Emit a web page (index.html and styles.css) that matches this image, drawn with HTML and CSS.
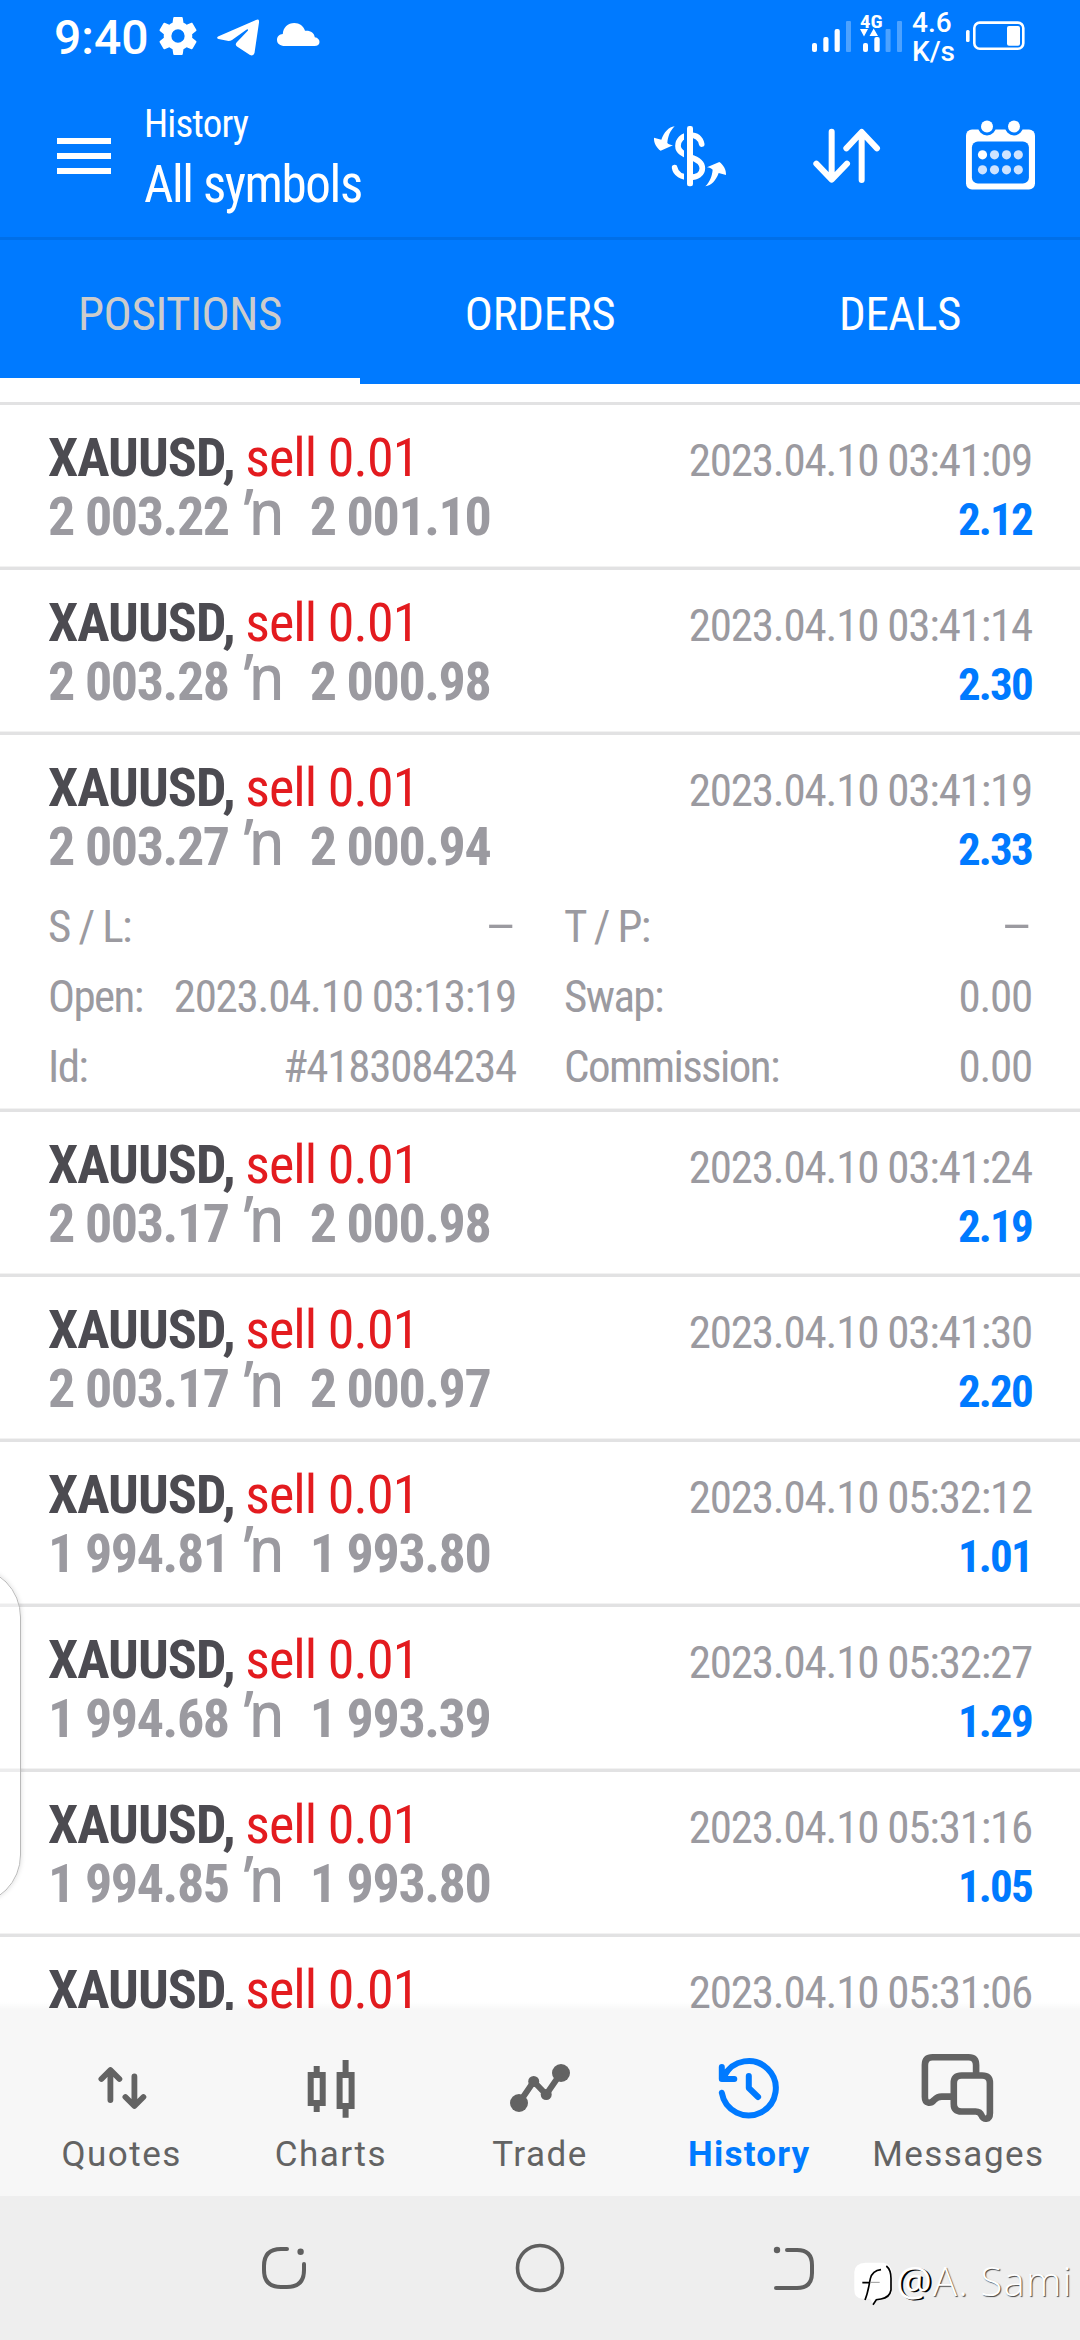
FILE: index.html
```html
<!DOCTYPE html>
<html lang="en">
<head>
<meta charset="utf-8">
<title>History</title>
<link rel="stylesheet" href="styles.css">
</head>
<body>
<div class="screen">
  <header class="top">
    <div class="status">
      <span class="clock">9:40</span>
      <svg class="gear" width="38" height="76" viewBox="0 0 38 76"><path transform="translate(-3.8 13.2) scale(1.9)" fill="#fff" d="M19.43 12.98c.04-.32.07-.64.07-.98s-.03-.66-.07-.98l2.11-1.65c.19-.15.24-.42.12-.64l-2-3.46c-.12-.22-.39-.3-.61-.22l-2.49 1c-.52-.4-1.08-.73-1.69-.98l-.38-2.65C14.46 2.18 14.25 2 14 2h-4c-.25 0-.46.18-.49.42l-.38 2.65c-.61.25-1.17.59-1.69.98l-2.49-1c-.23-.09-.49 0-.61.22l-2 3.46c-.13.22-.07.49.12.64l2.11 1.65c-.04.32-.07.65-.07.98s.03.66.07.98l-2.11 1.65c-.19.15-.24.42-.12.64l2 3.46c.12.22.39.3.61.22l2.49-1c.52.4 1.08.73 1.69.98l.38 2.65c.03.24.24.42.49.42h4c.25 0 .46-.18.49-.42l.38-2.65c.61-.25 1.17-.59 1.69-.98l2.49 1c.23.09.49 0 .61-.22l2-3.46c.12-.22.07-.49-.12-.64zM12 15.5A3.5 3.5 0 1 1 12 8.5a3.5 3.5 0 0 1 0 7z"/></svg>
      <svg class="plane" width="42" height="76" viewBox="217 0 42 76"><path fill="#fff" d="M218 36.500L256 20Q259.500 18.500 259 22.500L254.500 53Q253.500 56.500 250 55L237 46.500Q234.500 44.500 237 42L248 30.500Q248.500 28.500 246 30L232 40Q230.500 41 228.500 41L218.500 39Q216 38 218 36.500Z"/></svg>
      <svg class="cloud" width="43" height="76" viewBox="277 0 43 76"><path fill="#fff" d="M285 46C280 46 277 43.500 277 40C277 36.500 279.500 34.200 282.800 34C283 27.500 288 23 294.300 23C299.500 23 303.500 26 305 30.800C310.500 30.300 314.300 33 314.800 37.300C317.800 37.800 319.500 39.600 319.500 42C319.500 44.500 317.500 46 314.500 46Z"/></svg>
      <svg class="signal" width="91" height="76" viewBox="812 0 91 76">
        <g fill="#fff">
          <rect x="812" y="43" width="5" height="9" rx="2"/><rect x="823.300" y="37" width="5.200" height="15" rx="2"/><rect x="834.600" y="29" width="5.200" height="23" rx="2"/><rect x="846" y="21" width="5" height="31" rx="1" opacity=".3"/>
          <rect x="863" y="43" width="5" height="9" rx="2"/><rect x="874.300" y="37" width="5.400" height="15" rx="2"/><rect x="885.600" y="29" width="5" height="23" rx="1" opacity=".3"/><rect x="897" y="21" width="5" height="31" rx="1" opacity=".3"/>
          <path d="M860 29H868L864 36.500ZM869.500 36L873.700 28.500L878 36Z"/>
        </g>
        <text class="net-type" x="860" y="27.500" textLength="22.500" lengthAdjust="spacingAndGlyphs">4G</text>
      </svg>
      <span class="speed">4.6<br>K/s</span>
      <svg width="60" height="76" viewBox="966 0 60 76"><rect x="966" y="30" width="3.600" height="12" rx="1.500" fill="#fff"/><rect x="974.300" y="22.600" width="49" height="26.200" rx="5.500" fill="none" stroke="#fff" stroke-width="2.600"/><rect x="1007" y="26" width="13" height="19.700" rx="2" fill="#fff"/></svg>
    </div>
    <div class="bar">
      <svg class="menu" width="54" height="36" viewBox="0 0 54 36"><path d="M0 3H54M0 18H54M0 33H54" stroke="#fff" stroke-width="6"/></svg>
      <div class="titles">
        <div class="title">History</div>
        <div class="subtitle">All symbols</div>
      </div>
      <svg class="dollar" width="74" height="62" viewBox="39 44 222 186">
        <path fill="none" stroke="#fff" stroke-width="17" stroke-linecap="round" d="M185 101C181 83 168 74 150 74C128 74 114 89 114 107C114 124 130 132 150 140C172 147 187 157 187 174C187 191 172 201 150 201C125 201 107 190 104 172"/>
        <rect x="132" y="60" width="10" height="155" fill="#007aff"/>
        <rect x="141" y="47" width="18" height="181" rx="7" fill="#fff"/>
        <path id="turn" fill="#fff" d="M104 48C86 50 72 66 64 88L42 82C41 98 50 113 62 121L99 105C92 104 86 102 82 98C84 78 90 62 104 48Z"/>
        <use href="#turn" transform="rotate(180 150 138)"/>
      </svg>
      <svg class="sort" width="68" height="56" viewBox="517 54 204 168"><path fill="none" stroke="#fff" stroke-width="18" stroke-linecap="round" stroke-linejoin="round" d="M573 65V208M527 161L573 209L619 161M663 210V67M617 115L663 66L709 115"/></svg>
      <svg class="calendar" width="69" height="70" viewBox="966 119.500 69 70">
        <rect x="966" y="129" width="69" height="60" rx="6" fill="#fff"/>
        <rect x="971.900" y="141" width="57" height="42" rx="6" fill="#007aff"/>
        <circle cx="987" cy="126" r="9" fill="#007aff"/><circle cx="1014" cy="126" r="9" fill="#007aff"/>
        <g fill="#fff"><circle cx="987" cy="126" r="6"/><circle cx="1014" cy="126" r="6"/><circle cx="982.500" cy="154.300" r="4.600"/></g>
        <g fill="#cfe3ff"><circle cx="994.500" cy="154.300" r="4.600"/><circle cx="1006.500" cy="154.300" r="4.600"/><circle cx="1018.300" cy="154.300" r="4.600"/><circle cx="982.500" cy="169.300" r="4.600"/><circle cx="994.500" cy="169.300" r="4.600"/><circle cx="1006.500" cy="169.300" r="4.600"/><circle cx="1018.300" cy="169.300" r="4.600"/></g>
      </svg>
    </div>
    <nav class="tabs">
      <div class="tab active">POSITIONS</div>
      <div class="tab">ORDERS</div>
      <div class="tab">DEALS</div>
    </nav>
  </header>

  <main class="list">
    <article class="row">
      <div class="line"><b class="symbol">XAUUSD,</b><span class="lots">sell 0.01</span><time class="date">2023.04.10 03:41:09</time></div>
      <div class="line"><b class="price">2 003.22</b><span class="arrow"><i>ŉ</i></span><b class="price">2 001.10</b><b class="profit">2.12</b></div>
    </article>
    <article class="row">
      <div class="line"><b class="symbol">XAUUSD,</b><span class="lots">sell 0.01</span><time class="date">2023.04.10 03:41:14</time></div>
      <div class="line"><b class="price">2 003.28</b><span class="arrow"><i>ŉ</i></span><b class="price">2 000.98</b><b class="profit">2.30</b></div>
    </article>
    <article class="row">
      <div class="line"><b class="symbol">XAUUSD,</b><span class="lots">sell 0.01</span><time class="date">2023.04.10 03:41:19</time></div>
      <div class="line"><b class="price">2 003.27</b><span class="arrow"><i>ŉ</i></span><b class="price">2 000.94</b><b class="profit">2.33</b></div>
      <div class="details">
        <div class="pair"><span class="label">S / L:</span><span class="value dash">–</span></div>
        <div class="pair"><span class="label">T / P:</span><span class="value dash">–</span></div>
        <div class="pair"><span class="label">Open:</span><span class="value">2023.04.10 03:13:19</span></div>
        <div class="pair"><span class="label">Swap:</span><span class="value">0.00</span></div>
        <div class="pair"><span class="label">Id:</span><span class="value">#4183084234</span></div>
        <div class="pair"><span class="label">Commission:</span><span class="value">0.00</span></div>
      </div>
    </article>
    <article class="row">
      <div class="line"><b class="symbol">XAUUSD,</b><span class="lots">sell 0.01</span><time class="date">2023.04.10 03:41:24</time></div>
      <div class="line"><b class="price">2 003.17</b><span class="arrow"><i>ŉ</i></span><b class="price">2 000.98</b><b class="profit">2.19</b></div>
    </article>
    <article class="row">
      <div class="line"><b class="symbol">XAUUSD,</b><span class="lots">sell 0.01</span><time class="date">2023.04.10 03:41:30</time></div>
      <div class="line"><b class="price">2 003.17</b><span class="arrow"><i>ŉ</i></span><b class="price">2 000.97</b><b class="profit">2.20</b></div>
    </article>
    <article class="row">
      <div class="line"><b class="symbol">XAUUSD,</b><span class="lots">sell 0.01</span><time class="date">2023.04.10 05:32:12</time></div>
      <div class="line"><b class="price">1 994.81</b><span class="arrow"><i>ŉ</i></span><b class="price">1 993.80</b><b class="profit">1.01</b></div>
    </article>
    <article class="row">
      <div class="line"><b class="symbol">XAUUSD,</b><span class="lots">sell 0.01</span><time class="date">2023.04.10 05:32:27</time></div>
      <div class="line"><b class="price">1 994.68</b><span class="arrow"><i>ŉ</i></span><b class="price">1 993.39</b><b class="profit">1.29</b></div>
    </article>
    <article class="row">
      <div class="line"><b class="symbol">XAUUSD,</b><span class="lots">sell 0.01</span><time class="date">2023.04.10 05:31:16</time></div>
      <div class="line"><b class="price">1 994.85</b><span class="arrow"><i>ŉ</i></span><b class="price">1 993.80</b><b class="profit">1.05</b></div>
    </article>
    <article class="row">
      <div class="line"><b class="symbol">XAUUSD,</b><span class="lots">sell 0.01</span><time class="date">2023.04.10 05:31:06</time></div>
    </article>
  </main>

  <nav class="bottom">
    <div class="item">
      <svg width="80" height="78" viewBox="81.600 2050 80 78"><path fill="none" stroke="#636363" stroke-width="5.800" stroke-linecap="round" stroke-linejoin="round" d="M110 2100V2071M101 2079L110 2070L119 2079M134 2076.500V2105M125 2097L134 2106L143 2097"/></svg>
      <span>Quotes</span>
    </div>
    <div class="item">
      <svg width="80" height="78" viewBox="290.800 2050 80 78"><path fill="none" stroke="#636363" stroke-width="6" d="M310.500 2075H322.500V2103H310.500ZM316.500 2066V2073M316.500 2105V2112M339.400 2075H351.400V2106H339.400ZM345.400 2060V2073M345.400 2108V2117.700"/></svg>
      <span>Charts</span>
    </div>
    <div class="item">
      <svg width="80" height="78" viewBox="500 2050 80 78"><g fill="#636363"><circle cx="519" cy="2103" r="9"/><circle cx="533.700" cy="2081.500" r="5.500"/><circle cx="546.200" cy="2094.500" r="5.500"/><circle cx="561" cy="2073" r="9"/></g><path fill="none" stroke="#636363" stroke-width="6" d="M519 2103L533.700 2081.500L546.200 2094.500L561 2073"/></svg>
      <span>Trade</span>
    </div>
    <div class="item active">
      <svg width="80" height="78" viewBox="709.200 2050 80 78"><path fill="none" stroke="#007aff" stroke-width="6" stroke-linecap="round" stroke-linejoin="round" d="M722 2092.800A27.200 27.200 0 1 0 724.500 2076M722 2067V2079H734.500M749 2076V2088L758.300 2097"/></svg>
      <span>History</span>
    </div>
    <div class="item">
      <svg width="80" height="78" viewBox="918.400 2050 80 78"><path fill="none" stroke="#636363" stroke-width="6.600" stroke-linejoin="round" d="M976.500 2075V2065Q976.500 2057.300 969 2057.300H933Q925.300 2057.300 925.300 2065V2097C925.300 2104 931 2104 934.500 2100Q938 2096.600 942 2096.600H953M962 2075.500H982.500Q990.300 2075.500 990.300 2083V2113C990.300 2120.500 983.500 2120 982 2115.500Q980.500 2111.500 976 2111.500H962Q954.200 2111.500 954.200 2104V2083Q954.200 2075.500 962 2075.500Z"/></svg>
      <span>Messages</span>
    </div>
  </nav>

  <footer class="system">
    <svg width="50" height="50" viewBox="259 2243 50 50"><path fill="none" stroke="#5f5f5f" stroke-width="4" stroke-linecap="round" d="M287 2249H281Q264 2249 264 2266V2270Q264 2287 281 2287H287Q304 2287 304 2270V2264"/><circle cx="300.600" cy="2251.700" r="3.200" fill="#5f5f5f"/></svg>
    <svg width="50" height="50" viewBox="515 2243 50 50"><circle cx="540" cy="2268" r="22.500" fill="none" stroke="#5f5f5f" stroke-width="3.600"/></svg>
    <svg width="50" height="50" viewBox="771 2243 50 50"><path fill="none" stroke="#5f5f5f" stroke-width="4" stroke-linecap="round" d="M787 2250H797Q812 2250 812 2265V2273Q812 2288 797 2288H776"/><circle cx="777" cy="2250" r="3.200" fill="#5f5f5f"/></svg>
  </footer>

  <div class="edge-handle"></div>
  <div class="watermark">
    <svg width="42" height="46" viewBox="0 0 126 138"><path fill="#fff" d="M38 8H92Q118 12 117 45V92Q116 112 92 116H72L60 134L52 116H28Q4 116 4 90V36Q4 10 38 8Z"/><path fill="none" stroke="#000" stroke-width="5" d="M100 18Q115 30 114 60V90Q110 113 84 117L70 119L60 134M36 120C46 96 48 74 52 56Q58 32 84 29M28 68L48 67"/><path fill="none" stroke="#999" stroke-width="3" d="M52 67H80"/></svg>
    <span class="at">@</span><span>A. Sami</span>
  </div>
</div>
</body>
</html>
```
FILE: styles.css
```css
* { box-sizing: border-box; }
body { margin: 0; background: #fff; }
svg { display: block; flex: none; }

.screen {
  position: relative;
  display: flex;
  flex-direction: column;
  width: 1080px;
  height: 2340px;
  overflow: hidden;
  background: #fff;
  font-family: "Roboto Condensed", Roboto, sans-serif;
  white-space: nowrap;
}

/* Header */
.top { flex: none; background: #007aff; color: #fff; }
.status {
  display: flex;
  height: 76px;
  padding: 0 54px;
  font-family: Roboto, sans-serif;
  font-weight: 500;
}
.clock { font-size: 48px; line-height: 76px; width: 94px; }
.gear { margin-left: 11px; }
.plane { margin-left: 20px; }
.cloud { margin-left: 18px; }
.signal { margin-left: auto; overflow: visible; }
.net-type { font: 700 19px "Roboto Condensed", sans-serif; fill: #fff; }
.speed { width: 63px; padding: 8px 0 0 9px; font-size: 28px; line-height: 29px; }

.bar {
  display: flex;
  align-items: flex-start;
  height: 164px;
  padding: 25px 45px 0 57px;
  border-bottom: 3px solid #006fe8;
}
.menu { margin-top: 37px; }
.titles { margin-left: 33px; }
.title { font-size: 39px; line-height: 46px; letter-spacing: -.85px; }
.subtitle { margin-top: 8px; font-size: 51px; line-height: 60px; letter-spacing: -1.4px; }
.dollar { margin: 23.500px 0 0 auto; }
.sort { margin: 27px 0 0 86px; }
.calendar { margin: 18.500px 0 0 85px; }

.tabs { display: flex; height: 144px; }
.tab {
  flex: 1;
  padding-top: 3px;
  font-size: 47px;
  line-height: 142px;
  letter-spacing: -.4px;
  text-align: center;
}
.tab.active { color: #ccc; box-shadow: inset 0 -6px #fff; }

/* Position rows */
.list { flex: 1; min-height: 0; overflow: hidden; padding-top: 17px; border-top: 1px solid #fff; }
.row {
  padding: 23px 48px 20px;
  border-top: 3px solid #e2e2e3;
  border-bottom: 1px solid #f2f2f2;
}
.line {
  display: flex;
  align-items: baseline;
  height: 59px;
  font-size: 54px;
  line-height: 59px;
  color: #9b9aa0;
}
.symbol { color: #4c4b51; letter-spacing: -.95px; }
.lots { margin-left: 10.500px; color: #e31b1f; letter-spacing: -.9px; }
.price { letter-spacing: -1.4px; }
.arrow { width: 81px; padding-left: 15px; }
.arrow i {
  display: inline-block;
  font: 500 63px/0 "Noto Sans", sans-serif;
  transform: scaleX(.9);
  transform-origin: 0 0;
}
.date { margin-left: auto; font-size: 45px; letter-spacing: -1.2px; }
.profit { margin-left: auto; font-size: 45px; letter-spacing: -1.8px; color: #007aff; }

.details {
  display: grid;
  grid-template-columns: 1fr 1fr;
  column-gap: 48px;
  margin-top: 16px;
  margin-bottom: -14px;
  font-size: 45px;
  line-height: 70px;
  color: #9b9aa0;
}
.pair { display: flex; justify-content: space-between; }
.label { letter-spacing: -1.6px; }
.value { letter-spacing: -1.25px; }
.value.dash { transform: scaleX(1.25); transform-origin: 100% 50%; }

/* App navigation */
.bottom {
  position: relative;
  display: flex;
  flex: none;
  height: 186px;
  padding: 40px 17px 0;
  background: #f7f7f7;
  color: #636363;
  font: 400 35px/42px Roboto, sans-serif;
  letter-spacing: 1.5px;
}
.bottom::before {
  content: "";
  position: absolute;
  left: 0;
  right: 0;
  top: -8px;
  height: 8px;
  background: linear-gradient(rgba(0, 0, 0, 0), rgba(0, 0, 0, .03));
}
.item { flex: 1; display: flex; flex-direction: column; align-items: center; gap: 6px; }
.item.active { color: #007aff; font-weight: 700; letter-spacing: 1.2px; }

/* System navigation */
.system {
  display: flex;
  flex: none;
  gap: 206px;
  height: 144px;
  padding: 47px 0 0 259px;
  background: #eee;
}

/* Overlays */
.edge-handle {
  position: absolute;
  left: -79px;
  top: 1567px;
  width: 100px;
  height: 338px;
  border: 1px solid #b9b9b9;
  border-radius: 50px;
  background: rgba(255, 255, 255, .35);
  box-shadow: 0 0 5px rgba(0, 0, 0, .15);
}
.watermark {
  position: absolute;
  left: 853px;
  top: 2260px;
  display: flex;
  color: #fff;
  font: 300 40px/42px "Open Sans", sans-serif;
  letter-spacing: 1.2px;
  text-shadow: 1px 1px 1px #444;
}
.watermark .at { margin-left: 1px; font-weight: 400; text-shadow: 2px 1px 0 #000; }
```
